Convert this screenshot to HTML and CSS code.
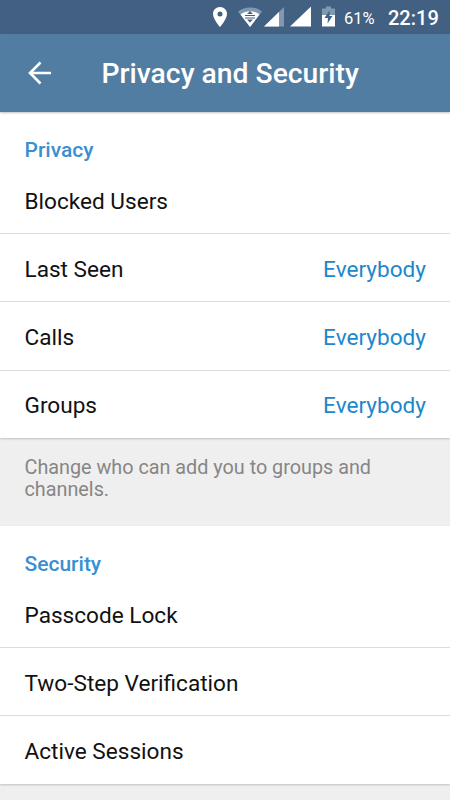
FILE: index.html
```html
<!DOCTYPE html>
<html lang="en">
<head>
  <meta charset="UTF-8">
  <meta name="viewport" content="width=device-width, initial-scale=1.0">
  <title>Privacy and Security</title>
  <link rel="stylesheet" href="styles.css">
</head>
<body>
  <div class="status-bar">
    <svg class="status-icons" width="126" height="34" viewBox="0 0 126 34">
      <!-- location -->
      <path fill="#fff" fill-rule="evenodd" d="M10 7c-4 0-7 3.100-7 7 0 5 7 13 7 13s7-8 7-13c0-3.900-3-7-7-7zm0 4.500a2.500 2.500 0 1 1 0 5 2.500 2.500 0 0 1 0-5z"/>
      <!-- wifi -->
      <path fill="#8098b0" d="M28 11.500c7-5.500 17-5.500 24 0L40 27z"/>
      <path fill="#fff" d="M30.500 14.600c5.500-4.400 13.500-4.400 19 0L40 27z"/>
      <path fill="none" stroke="#426182" stroke-width="1" d="M35 15.500h10M35 18h10"/>
      <path fill="#426182" d="M37 14l3-3 3 3zM37 19.500l3 3 3-3z"/>
      <!-- signal -->
      <path fill="#8098b0" d="M54 26.500L74 7v19.500z"/>
      <path fill="#fff" d="M54 26.500L69 12v14.500z"/>
      <path fill="#fff" d="M80 26.500L101 6.500v20z"/>
      <!-- battery -->
      <path fill="#8098b0" d="M112 8.500h4v-2h5v2h4v7h-13z"/>
      <path fill="#fff" d="M112 15h13v11.500h-13z"/>
      <path fill="#426182" d="M119.500 10.500l-5 7.500h3.500l-.5 5.500 5-7.500h-3z"/>
    </svg>
    <span class="battery">61%</span>
    <span class="clock">22:19</span>
  </div>

  <header class="toolbar">
    <svg class="back" width="24" height="24" viewBox="0 0 24 24">
      <path d="M23 12H2M12.500 1.500L2 12l10.500 10.500"/>
    </svg>
    <h1>Privacy and Security</h1>
  </header>

  <main>
    <section class="group">
      <h2>Privacy</h2>
      <div class="row"><span>Blocked Users</span></div>
      <div class="row"><span>Last Seen</span><span class="value">Everybody</span></div>
      <div class="row"><span>Calls</span><span class="value">Everybody</span></div>
      <div class="row"><span>Groups</span><span class="value">Everybody</span></div>
    </section>

    <p class="hint">Change who can add you to groups and channels.</p>

    <section class="group">
      <h2>Security</h2>
      <div class="row"><span>Passcode Lock</span></div>
      <div class="row"><span>Two-Step Verification</span></div>
      <div class="row"><span>Active Sessions</span></div>
    </section>
  </main>
</body>
</html>
```
FILE: styles.css
```css
* {
  box-sizing: border-box;
}
body {
  margin: 0;
  height: 800px;
  overflow: hidden;
  background-color: #efefef;
  color: #111;
  font-family: Roboto, sans-serif;
}
.status-bar {
  display: flex;
  align-items: center;
  height: 34px;
  padding-left: 210px;
  background-color: #426182;
  color: #fff;
  white-space: nowrap;
}
.battery {
  width: 44px;
  padding-left: 8px;
  padding-top: 2px;
  font-size: 16.5px;
}
.clock {
  margin-left: 8px;
  padding-top: 1px;
  font-size: 20px;
  font-weight: 500;
}
.toolbar {
  position: relative;
  display: flex;
  align-items: center;
  height: 78px;
  padding-left: 27.5px;
  background-color: #527da3;
  box-shadow: 0 1px 2px rgba(0,0,0,0.25);
  color: #fff;
}
.back {
  fill: none;
  stroke: #fff;
  stroke-width: 2.6;
}
h1 {
  margin: 0 0 0 50px;
  font-size: 28.3px;
  font-weight: 500;
}
.group {
  background-color: #fff;
  box-shadow: 0 1px 2px rgba(0,0,0,0.2);
}
h2 {
  height: 53.5px;
  margin: 0;
  padding: 25px 24.5px 0;
  color: #3a8fd0;
  font-size: 21px;
  font-weight: 500;
  line-height: 26px;
}
.row {
  display: flex;
  justify-content: space-between;
  align-items: center;
  height: 68.4px;
  padding: 4px 24px 0 24.5px;
  border-bottom: 1px solid #dcdcdc;
  font-size: 22.6px;
}
.row:last-child {
  height: 67.3px;
  padding-top: 3px;
  border-bottom: none;
}
.value {
  color: #1c88cb;
}
.hint {
  height: 88px;
  margin: 0;
  padding: 19px 24.5px 0;
  color: #868686;
  font-size: 19.8px;
  line-height: 22.5px;
}
```
